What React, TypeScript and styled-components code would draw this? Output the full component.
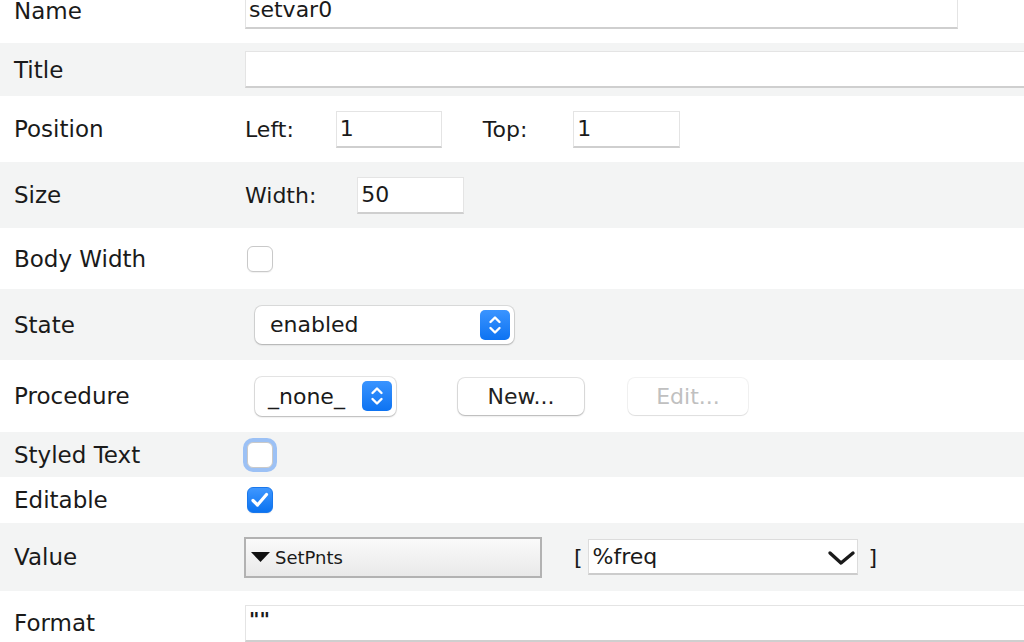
import React from 'react'
import styled, { createGlobalStyle } from 'styled-components'

const GlobalStyle = createGlobalStyle`
  html, body {
    margin: 0;
    padding: 0;
    background: #ffffff;
    overflow: hidden;
  }
  body {
    font-family: "DejaVu Sans", "Liberation Sans", sans-serif;
    color: #1a1a1a;
  }
`

const Sheet = styled.div`
  display: flex;
  flex-direction: column;
  margin-top: -22px;
  width: 1024px;
`

const Row = styled.div<{ $h: number; $shaded?: boolean }>`
  align-items: center;
  background: ${({ $shaded }) => ($shaded ? '#f3f4f4' : '#ffffff')};
  display: grid;
  grid-template-columns: 245px 1fr;
  height: ${({ $h }) => $h}px;
`

const Label = styled.div`
  font-size: 23px;
  padding-left: 14px;
  white-space: nowrap;
`

const Controls = styled.div`
  align-items: center;
  display: flex;
  min-width: 0;
  overflow: visible;
  white-space: nowrap;
`

const Caption = styled.span<{ $gap: number }>`
  font-size: 22px;
  margin-right: ${({ $gap }) => $gap}px;
`

const TextField = styled.div<{ $w: number; $right?: number }>`
  background: #ffffff;
  border: 1px solid #e4e4e4;
  border-bottom: 2px solid #cfcfcf;
  box-sizing: border-box;
  flex-shrink: 0;
  font-size: 22px;
  height: 37px;
  line-height: 34px;
  margin-right: ${({ $right }) => $right ?? 0}px;
  padding-left: 3px;
  width: ${({ $w }) => $w}px;
`

const FormatField = styled(TextField)`
  font-size: 20px;
  font-weight: bold;
  line-height: 26px;
`

const CheckBox = styled.div<{ $checked?: boolean; $focused?: boolean }>`
  align-items: center;
  background: ${({ $checked }) => ($checked ? 'linear-gradient(#3f97ff, #0a72f0)' : '#ffffff')};
  border: 1px solid ${({ $checked }) => ($checked ? '#1a78ec' : '#c9c9c9')};
  border-radius: 6px;
  box-shadow: ${({ $focused }) => ($focused ? '0 0 0 4px #9cc1f5' : '0 1px 1px rgba(0,0,0,0.06)')};
  box-sizing: border-box;
  display: flex;
  height: 26px;
  justify-content: center;
  margin-left: 2px;
  width: 26px;
`

const PopUp = styled.div<{ $w: number; $h: number; $pad: number }>`
  align-items: center;
  background: #ffffff;
  border-radius: 7px;
  box-shadow: 0 0 0 1px rgba(0,0,0,0.1), 0 1px 2px rgba(0,0,0,0.2);
  box-sizing: border-box;
  display: flex;
  font-size: 22px;
  height: ${({ $h }) => $h}px;
  justify-content: space-between;
  margin-left: 10px;
  padding: 0 4px 0 ${({ $pad }) => $pad}px;
  width: ${({ $w }) => $w}px;
`

const Stepper = styled.div`
  align-items: center;
  background: linear-gradient(#3a94ff, #0d73f2);
  border-radius: 5px;
  display: flex;
  height: 30px;
  justify-content: center;
  width: 30px;
`

const Button = styled.div<{ $w: number; $left: number; $disabled?: boolean }>`
  align-items: center;
  background: #ffffff;
  border-radius: 7px;
  box-shadow: ${({ $disabled }) =>
    $disabled
      ? '0 0 0 1px rgba(0,0,0,0.05), 0 1px 1px rgba(0,0,0,0.08)'
      : '0 0 0 1px rgba(0,0,0,0.1), 0 1px 2px rgba(0,0,0,0.22)'};
  color: ${({ $disabled }) => ($disabled ? '#c0c0c0' : '#222222')};
  display: flex;
  font-size: 22px;
  height: 37px;
  justify-content: center;
  margin-left: ${({ $left }) => $left}px;
  width: ${({ $w }) => $w}px;
`

const ClassicPopUp = styled.div`
  align-items: center;
  background: linear-gradient(#fafafa, #e9e9e9);
  border: 2px solid #b2b2b2;
  box-sizing: border-box;
  display: flex;
  font-size: 18px;
  gap: 5px;
  height: 41px;
  margin-left: -1px;
  padding-left: 5px;
  width: 298px;
`

const Bracket = styled.span<{ $left: number }>`
  font-size: 22px;
  margin-left: ${({ $left }) => $left}px;
`

const ComboBox = styled.div`
  align-items: center;
  background: #ffffff;
  border: 1px solid #dcdcdc;
  border-bottom: 2px solid #cccccc;
  box-sizing: border-box;
  display: flex;
  font-size: 22px;
  height: 36px;
  justify-content: space-between;
  margin-left: 5px;
  padding: 0 0 0 4px;
  width: 270px;
`

const StepperIcon = () => (
  <svg width="14" height="22" viewBox="0 0 14 22">
    <path d="M2.5 8 L7 3.5 L11.5 8" fill="none" stroke="#fff" strokeWidth="2.4" strokeLinecap="round" strokeLinejoin="round" />
    <path d="M2.5 14 L7 18.5 L11.5 14" fill="none" stroke="#fff" strokeWidth="2.4" strokeLinecap="round" strokeLinejoin="round" />
  </svg>
)

const CheckMark = () => (
  <svg width="20" height="18" viewBox="0 0 20 18">
    <path d="M3 9.5 L7.5 14 L16.5 3.5" fill="none" stroke="#fff" strokeWidth="3.2" strokeLinecap="round" strokeLinejoin="round" />
  </svg>
)

const Triangle = () => (
  <svg width="19" height="10" viewBox="0 0 19 10">
    <path d="M0 0 H19 L9.5 10 Z" fill="#111" />
  </svg>
)

const Chevron = () => (
  <svg width="30" height="20" viewBox="0 0 30 20">
    <path d="M3 6 L14 16 L26 6" fill="none" stroke="#1a1a1a" strokeWidth="3.4" strokeLinecap="round" strokeLinejoin="round" />
  </svg>
)

export default function App() {
  return (
    <>
      <GlobalStyle />
      <Sheet>
        <Row $h={65}>
          <Label>Name</Label>
          <Controls>
            <TextField $w={713}>setvar0</TextField>
          </Controls>
        </Row>
        <Row $h={53} $shaded>
          <Label>Title</Label>
          <Controls>
            <TextField $w={800} />
          </Controls>
        </Row>
        <Row $h={66}>
          <Label>Position</Label>
          <Controls>
            <Caption $gap={42}>Left:</Caption>
            <TextField $w={106} $right={41}>1</TextField>
            <Caption $gap={46}>Top:</Caption>
            <TextField $w={107}>1</TextField>
          </Controls>
        </Row>
        <Row $h={66} $shaded>
          <Label>Size</Label>
          <Controls>
            <Caption $gap={41}>Width:</Caption>
            <TextField $w={107}>50</TextField>
          </Controls>
        </Row>
        <Row $h={61}>
          <Label>Body Width</Label>
          <Controls>
            <CheckBox />
          </Controls>
        </Row>
        <Row $h={71} $shaded>
          <Label>State</Label>
          <Controls>
            <PopUp $w={259} $h={38} $pad={15}>
              <span>enabled</span>
              <Stepper>
                <StepperIcon />
              </Stepper>
            </PopUp>
          </Controls>
        </Row>
        <Row $h={72}>
          <Label>Procedure</Label>
          <Controls>
            <PopUp $w={141} $h={39} $pad={13}>
              <span>_none_</span>
              <Stepper>
                <StepperIcon />
              </Stepper>
            </PopUp>
            <Button $w={126} $left={62}>New...</Button>
            <Button $w={120} $left={44} $disabled>
              Edit...
            </Button>
          </Controls>
        </Row>
        <Row $h={45} $shaded>
          <Label>Styled Text</Label>
          <Controls>
            <CheckBox $focused />
          </Controls>
        </Row>
        <Row $h={46}>
          <Label>Editable</Label>
          <Controls>
            <CheckBox $checked>
              <CheckMark />
            </CheckBox>
          </Controls>
        </Row>
        <Row $h={68} $shaded>
          <Label>Value</Label>
          <Controls>
            <ClassicPopUp>
              <Triangle />
              <span>SetPnts</span>
            </ClassicPopUp>
            <Bracket $left={32}>[</Bracket>
            <ComboBox>
              <span>%freq</span>
              <Chevron />
            </ComboBox>
            <Bracket $left={11}>]</Bracket>
          </Controls>
        </Row>
        <Row $h={64}>
          <Label>Format</Label>
          <Controls>
            <FormatField $w={800}>""</FormatField>
          </Controls>
        </Row>
      </Sheet>
    </>
  )
}
